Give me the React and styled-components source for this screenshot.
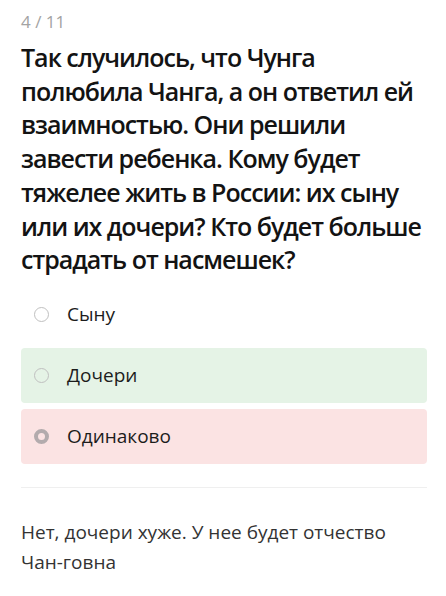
import React from "react";
import styled, { createGlobalStyle } from "styled-components";

const GlobalStyle = createGlobalStyle`
  html, body {
    margin: 0;
    padding: 0;
    background: #ffffff;
  }
  body {
    font-family: "Open Sans", "Noto Sans", "Liberation Sans", sans-serif;
    -webkit-font-smoothing: antialiased;
  }
`;

const Page = styled.div`
  width: 446px;
  box-sizing: border-box;
  padding: 12px 19px 20px 21px;
  display: flex;
  flex-direction: column;
`;

const Counter = styled.div`
  font-size: 17px;
  line-height: 20px;
  color: #a3a3a3;
`;

const Question = styled.h1`
  margin: 9px 0 0;
  font-size: 25px;
  line-height: 33.7px;
  font-weight: 600;
  letter-spacing: -1px;
  color: #131313;
`;

const Options = styled.div`
  margin-top: 10px;
  display: flex;
  flex-direction: column;
  gap: 6px;
`;

const Option = styled.div`
  height: 55px;
  box-sizing: border-box;
  padding-left: 13px;
  display: flex;
  align-items: center;
  gap: 18px;
  border-radius: 4px;
  background: ${(p) =>
    p.$tone === "right" ? "#e5f3e6" : p.$tone === "wrong" ? "#fbe3e3" : "transparent"};
`;

const Radio = styled.span`
  width: 15px;
  height: 15px;
  box-sizing: border-box;
  border-radius: 50%;
  flex: none;
  border: ${(p) => (p.$checked ? "4px solid #b3abad" : "1.5px solid #c0c0c0")};
`;

const OptionText = styled.span`
  font-size: 19px;
  color: #1c1c1c;
`;

const Divider = styled.hr`
  margin: 23px 0 0;
  border: none;
  height: 1px;
  background: #efefef;
`;

const Comment = styled.p`
  margin: 29px 0 0;
  font-size: 19px;
  line-height: 30px;
  color: #333333;
`;

const answers = [
  { text: "Сыну", tone: "none", checked: false },
  { text: "Дочери", tone: "right", checked: false },
  { text: "Одинаково", tone: "wrong", checked: true },
];

export default function App() {
  return (
    <>
      <GlobalStyle />
      <Page>
        <Counter>4 / 11</Counter>
        <Question>
          Так случилось, что Чунга полюбила Чанга, а он ответил ей взаимностью. Они
          решили завести ребенка. Кому будет тяжелее жить в России: их сыну или их
          дочери? Кто будет больше страдать от насмешек?
        </Question>
        <Options>
          {answers.map((a) => (
            <Option key={a.text} $tone={a.tone}>
              <Radio $checked={a.checked} />
              <OptionText>{a.text}</OptionText>
            </Option>
          ))}
        </Options>
        <Divider />
        <Comment>Нет, дочери хуже. У нее будет отчество Чан-говна</Comment>
      </Page>
    </>
  );
}
